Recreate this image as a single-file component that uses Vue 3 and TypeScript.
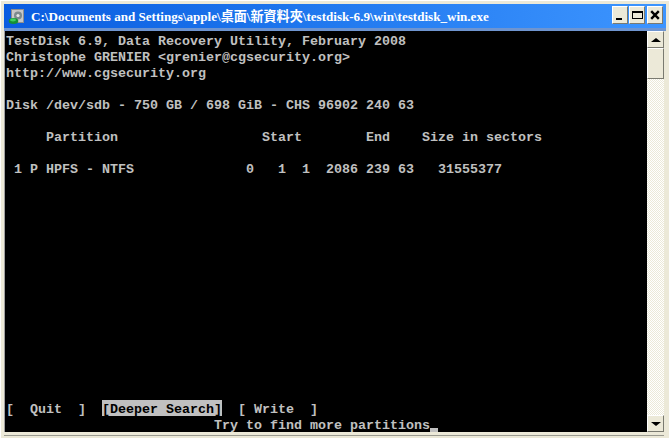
<script setup lang="ts">
const rows: string[] = [
  'TestDisk 6.9, Data Recovery Utility, February 2008',
  'Christophe GRENIER <grenier@cgsecurity.org>',
  'http://www.cgsecurity.org',
  '',
  'Disk /dev/sdb - 750 GB / 698 GiB - CHS 96902 240 63',
  '',
  '     Partition                  Start        End    Size in sectors',
  '',
  ' 1 P HPFS - NTFS              0   1  1  2086 239 63   31555377',
  ...Array.from({ length: 14 }, () => ''),
]
const quit = '[  Quit  ]  '
const deeper = '[Deeper Search]'
const write = '  [ Write  ]'
const hint = '                          Try to find more partitions'
</script>

<template>
  <div class="window">
    <div class="titlebar">
      <svg class="appicon" width="17" height="17" viewBox="0 0 17 17">
        <rect x="3" y="1" width="13" height="14" fill="#8f8f8f" />
        <rect x="4" y="2" width="11" height="12" fill="#c8c8c8" />
        <circle cx="10" cy="7.5" r="4" fill="#7d8a8d" />
        <circle cx="10" cy="7.5" r="1.6" fill="#e8e8e8" />
        <ellipse cx="5.5" cy="13" rx="4.8" ry="3" fill="#159033" />
        <ellipse cx="5" cy="12" rx="3" ry="1.4" fill="#3fd060" />
      </svg>
      <span class="title">C:\Documents and Settings\apple\桌面\新資料夾\testdisk-6.9\win\testdisk_win.exe</span>
      <div class="controls">
        <button class="ctl"><span class="min"></span></button>
        <button class="ctl"><span class="max"></span></button>
        <button class="ctl close">
          <svg width="10" height="10" viewBox="0 0 10 10"><path d="M1.2 1.2 L8.8 8.8 M8.8 1.2 L1.2 8.8" stroke="#000" stroke-width="2.4" /></svg>
        </button>
      </div>
    </div>
    <div class="body">
      <div class="terminal">
        <div v-for="(r, i) in rows" :key="i" class="row">{{ r }}</div>
        <div class="row">{{ quit }}<span class="hl">{{ deeper }}</span>{{ write }}</div>
        <div class="row">{{ hint }}<span class="cursor"></span></div>
      </div>
      <div class="scrollbar">
        <div class="sbtn"><span class="up"></span></div>
        <div class="thumb"></div>
        <div class="track"></div>
        <div class="sbtn"><span class="down"></span></div>
      </div>
    </div>
  </div>
</template>

<style scoped>
.window {
  width: 669px;
  height: 438px;
  box-sizing: border-box;
  display: flex;
  flex-direction: column;
  background: #ece9d8;
  padding: 3px 3px 6px 3px;
  overflow: hidden;
  border-top: 1px solid #fff;
  border-left: 1px solid #fff;
}
.titlebar {
  height: 24px;
  flex: none;
  display: flex;
  align-items: center;
  background: linear-gradient(90deg, #0a5ce0 0%, #1c74ec 40%, #3d95ff 100%);
  padding: 0 3px 0 4px;
  border-bottom: 3px solid #6f95d0;
  box-sizing: content-box;
}
.appicon { flex: none; margin-right: 6px; }
.title {
  flex: 1;
  margin-bottom: 2px;
  font: bold 13.08px "Liberation Serif", "Noto Sans CJK TC", serif;
  color: #fff;
  white-space: nowrap;
}
.controls { display: flex; gap: 1px; margin-bottom: 2px; }
.ctl {
  width: 16px;
  height: 18px;
  padding: 0;
  box-sizing: border-box;
  background: #ece9d8;
  border: 1px solid;
  border-color: #fff #7a7a70 #7a7a70 #fff;
  display: flex;
  align-items: center;
  justify-content: center;
}
.close { margin-left: 1px; }
.min { width: 6px; height: 2px; background: #000; align-self: flex-end; margin-bottom: 3px; margin-right: 3px; }
.max { width: 9px; height: 5px; border: 1px solid #000; border-top-width: 2px; box-sizing: content-box; }
.body {
  flex: 1;
  min-height: 0;
  display: flex;
  border-left: 1px solid #a0a0a0;
  margin-right: 2px;
  box-shadow: 0 3px 0 #ece9d8, 0 4px 0 #9a9a90;
}
.terminal {
  flex: 1;
  background: #000;
  padding: 1px 0 0 1px;
  color: #c0c0c0;
  font: bold 13.33px/20px "Liberation Mono", monospace;
}
.row { height: 16px; white-space: pre; }
.hl {
  display: inline-block;
  height: 16px;
  vertical-align: top;
  background: #c0c0c0;
  color: #000;
}
.cursor {
  display: inline-block;
  width: 8px;
  height: 4px;
  margin-top: 12px;
  vertical-align: top;
  background: #c0c0c0;
}
.scrollbar {
  width: 17px;
  flex: none;
  display: flex;
  flex-direction: column;
  background: repeating-conic-gradient(#fff 0 25%, #ece9d8 0 50%) 0 0 / 2px 2px;
}
.sbtn {
  height: 17px;
  flex: none;
  box-sizing: border-box;
  background: #ece9d8;
  border: 1px solid;
  border-color: #fff #7a7a70 #7a7a70 #fff;
  display: flex;
  align-items: center;
  justify-content: center;
}
.up { border: 5px solid transparent; border-top: 0; border-bottom: 4px solid #000; }
.down { border: 5px solid transparent; border-bottom: 0; border-top: 4px solid #000; }
.thumb {
  height: 31px;
  flex: none;
  box-sizing: border-box;
  background: #ece9d8;
  border: 1px solid;
  border-color: #fff #7a7a70 #7a7a70 #fff;
}
.track { flex: 1; }
</style>
